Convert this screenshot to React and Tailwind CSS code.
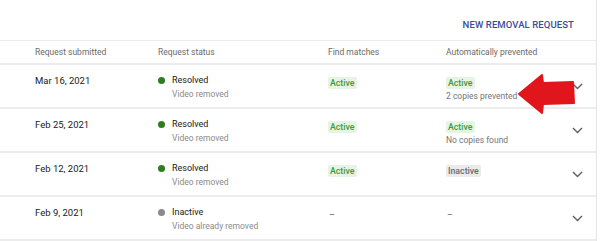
import React from "react";

const rows = [
  {
    date: "Mar 16, 2021",
    status: "Resolved",
    note: "Video removed",
    dot: "bg-[#2d7d1f]",
    find: "Active",
    auto: "Active",
    autoNote: "2 copies prevented",
  },
  {
    date: "Feb 25, 2021",
    status: "Resolved",
    note: "Video removed",
    dot: "bg-[#2d7d1f]",
    find: "Active",
    auto: "Active",
    autoNote: "No copies found",
  },
  {
    date: "Feb 12, 2021",
    status: "Resolved",
    note: "Video removed",
    dot: "bg-[#2d7d1f]",
    find: "Active",
    auto: "Inactive",
    autoNote: "",
  },
  {
    date: "Feb 9, 2021",
    status: "Inactive",
    note: "Video already removed",
    dot: "bg-[#8a8a8a]",
    find: null,
    auto: null,
    autoNote: "",
  },
];

function Badge({ label }) {
  if (!label) return <span className="text-[9px] text-[#606060] pl-[1px]">–</span>;
  const active = label === "Active";
  return (
    <span
      className={
        "inline-block px-[2px] leading-[12px] text-[8.75px] font-medium rounded-[2px] " +
        (active ? "bg-[#e6f4e6] text-[#3a9a3a]" : "bg-[#ebebeb] text-[#6a6a6a]")
      }
    >
      {label}
    </span>
  );
}

function Chevron() {
  return (
    <svg width="11" height="7" viewBox="0 0 11 7" className="block">
      <polyline points="1,1 5.5,5.5 10,1" fill="none" stroke="#606060" strokeWidth="1.4" />
    </svg>
  );
}

export default function App() {
  return (
    <div
      className="relative w-[600px] h-[241px] overflow-hidden bg-white"
      style={{ fontFamily: "Roboto, 'Liberation Sans', sans-serif" }}
    >
      <div className="w-[597px] border-r border-[#e6e6e6] h-full">
        <div className="h-[40px] flex items-center justify-end pr-[22px] pt-[11px]">
          <span className="text-[9.5px] font-medium tracking-[0.1px] text-[#3e4a9a]">
            NEW REMOVAL REQUEST
          </span>
        </div>
        <div className="border-t border-b-2 border-[#ececec] h-[25px] flex items-center pl-[35px] text-[8.5px] text-[#6a6a6a]">
          <div className="w-[123px]">Request submitted</div>
          <div className="w-[170px]">Request status</div>
          <div className="w-[118px]">Find matches</div>
          <div>Automatically prevented</div>
        </div>
        {rows.map((r) => (
          <div
            key={r.date}
            className="h-[44px] border-b-2 border-[#ececec] flex items-start pl-[35px] pt-[9px]"
          >
            <div className="w-[123px] text-[9.5px] leading-[13px] text-[#202020]">{r.date}</div>
            <div className="w-[170px] flex items-start">
              <span className={"mt-[3px] w-[7px] h-[7px] rounded-full " + r.dot}></span>
              <div className="ml-[7px]">
                <div className="text-[9px] leading-[13px] text-[#202020]">{r.status}</div>
                <div className="text-[8.5px] leading-[12px] mt-[1px] text-[#8a8a8a]">{r.note}</div>
              </div>
            </div>
            <div className="w-[118px] leading-[13px]">
              <Badge label={r.find} />
            </div>
            <div className="w-[120px] leading-[13px]">
              <Badge label={r.auto} />
              {r.autoNote && (
                <div className="text-[8.5px] leading-[12px] mt-[1px] text-[#757575]">{r.autoNote}</div>
              )}
            </div>
            <div className="self-center -mt-[8px] ml-[6px]">
              <Chevron />
            </div>
          </div>
        ))}
      </div>
      <svg
        className="absolute left-[517px] top-[73px]"
        width="60"
        height="44"
        viewBox="0 0 60 44"
      >
        <polygon
          points="2,21 25,2 26,10 56,9 57,30 26,31 25,40"
          fill="#e0161c"
          stroke="#e0161c"
          strokeWidth="2"
          strokeLinejoin="round"
        />
      </svg>
    </div>
  );
}
